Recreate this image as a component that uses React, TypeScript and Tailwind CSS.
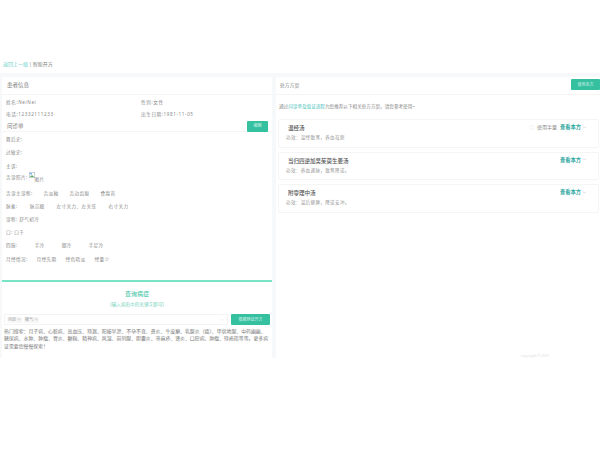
import { ChevronDown } from "lucide-react";

const FONT = "font-['Noto_Sans','Noto_Sans_CJK_SC',sans-serif]";

function InfoLine({ items, gap = "gap-[11px]" }: { items: string[]; gap?: string }) {
  return (
    <div className={`flex items-center h-[13.2px] text-[4.6px] tracking-[0.4px] text-[#8a8a8a] ${gap}`}>
      {items.map((t) => (
        <span key={t} className="whitespace-nowrap">{t}</span>
      ))}
    </div>
  );
}

const recipes = [
  { name: "温经汤", desc: "功效：温经散寒，养血祛瘀", extra: true },
  { name: "当归四逆加吴茱萸生姜汤", desc: "功效：养血通脉，散寒降逆。", extra: false },
  { name: "附零理中汤", desc: "功效：温后健脾，降逆安冲。", extra: false },
];

export default function App() {
  return (
    <div className={`w-[600px] h-[450px] bg-white flex flex-col overflow-hidden ${FONT}`}>
      {/* top breadcrumb */}
      <div className="h-[73px] flex items-end pb-[5px] pl-[3px] text-[5px] leading-[7px] text-[#888]">
        <span className="text-[#6fd3cb]">返回上一级</span>
        <span className="mx-[1px]">|</span>
        <span>智能开方</span>
      </div>

      <div className="h-[285px] bg-[#f7f8fa] flex gap-[4px] pt-[4px] pl-[2px]">
        {/* patient info */}
        <div className="w-[270px] h-[281px] bg-white flex flex-col">
          <div className="h-[18px] flex items-center pl-[5px] text-[5.5px] text-[#777] border-b border-[#f5f5f5]">患者信息</div>
          <div className="px-[4px] pt-[1px]">
            <div className="grid grid-cols-[135px_1fr] text-[4.6px] tracking-[0.6px] text-[#8a8a8a]">
              <div className="h-[12.5px] flex items-center">姓名:NeiNei</div>
              <div className="h-[12.5px] flex items-center">性别:女性</div>
              <div className="h-[12.5px] flex items-center">电话:12332111233</div>
              <div className="h-[12.5px] flex items-center">出生日期:1981-11-05</div>
            </div>
          </div>
          <div className="h-[11px] flex items-center justify-between pl-[5px] pr-[4px] border-b border-[#f5f5f5] text-[5.5px] text-[#777]">
            <span>问诊单</span>
            <button className="w-[21px] h-[11px] rounded-[1px] bg-[#35c0a0] text-[#d8f3ec] text-[4px]">编辑</button>
          </div>
          <div className="pl-[4px] pt-[1px] flex flex-col">
            <InfoLine items={["舞后史:"]} />
            <InfoLine items={["过敏史:"]} />
            <InfoLine items={["主诉:"]} />
            <div className="flex items-start h-[14px] text-[4.6px] tracking-[0.4px] text-[#8a8a8a]">
              <span className="mt-[1px]">舌诊照片:</span>
              <span className="relative w-[15px] h-[12px] -mt-[1px] ml-[1px]">
                <svg viewBox="0 0 6 6" className="absolute left-0 top-0 w-[6px] h-[6px]">
                  <rect x="0.3" y="0.3" width="5.4" height="5.4" fill="#fff" stroke="#a9b3c0" strokeWidth="0.6" />
                  <path d="M1 5 L3 3 L5 5 Z" fill="#4caf50" />
                  <rect x="1" y="1" width="2" height="1.5" fill="#7fb2f0" />
                </svg>
                <span className="absolute left-[6px] top-[4px] whitespace-nowrap">图片</span>
              </span>
            </div>
            <InfoLine items={["舌诊主诊断:", "舌淡釉", "舌边齿痕", "食腐苔"]} />
            <InfoLine items={["脉象:", "脉沉细", "左寸关力、左关弦", "右寸关力"]} gap="gap-[12px]" />
            <InfoLine items={["诊断: 舒气初冷"]} />
            <InfoLine items={["口: 口干"]} />
            <InfoLine items={["四肢:", "手冷", "脚冷", "手足冷"]} gap="gap-[17px]" />
            <InfoLine items={["月经情况:", "月经先期", "经色暗淡", "经量少"]} gap="gap-[9px]" />
          </div>

          {/* syndrome search */}
          <div className="mt-auto h-[78px] border-t-2 border-[#7ae3c6] flex flex-col">
            <div className="text-center text-[6px] leading-[8px] text-[#35c0a0] mt-[8px]">查询病症</div>
            <div className="text-center text-[4.6px] leading-[7px] text-[#6fd0b8] mt-[3px]">(输入病名中的关键字即可)</div>
            <div className="flex items-center justify-between mt-[6px] px-[2px]">
              <div className="w-[224px] h-[11px] border border-[#f3f3f3] flex items-center justify-between pl-[2px] pr-[3px] text-[4px] text-[#999]">
                <span className="flex gap-[2px]">
                  <span className="bg-[#f7f7f7] px-[1px]">月经 ⓧ</span>
                  <span className="bg-[#f7f7f7] px-[1px]">痛气 ⓧ</span>
                </span>
                <ChevronDown className="w-[4px] h-[4px] text-[#ccc]" />
              </div>
              <button className="w-[39px] h-[11px] rounded-[1px] bg-[#35c0a0] text-[#d8f3ec] text-[4px]">根据辨证开方</button>
            </div>
            <p className="px-[2px] mt-[3px] text-[4.9px] leading-[7.4px] text-[#777]">
              热门搜索：月子病、心脏病、高血压、痔漏、阳痿早泄、不孕不育、鼻炎、牛皮癣、乳腺炎（癌）、甲状地腺、中药幽幽、糖尿病、水肿、肿瘤、胃炎、癫痫、精神病、风湿、前列腺、胆囊炎、荨麻疹、肾炎、口腔病、肿瘤、痔疮指等等。更多病证需要您慢慢探索！
            </p>
          </div>
        </div>

        {/* prescription plan */}
        <div className="flex-1 h-[281px] bg-white flex flex-col">
          <div className="h-[18px] flex items-center justify-between pl-[4px] text-[4.8px] text-[#888] border-b border-[#f5f5f5]">
            <span>处方方案</span>
            <button className="w-[29px] h-[11px] -mt-[2px] rounded-[1px] bg-[#35c0a0] text-[#d8f3ec] text-[4px]">使用本方</button>
          </div>
          <div className="pl-[3px] h-[23px] flex items-center text-[4.6px] text-[#888]">
            <span>
              通过<span className="text-[#4cc4bb]">问诊单及值证流程</span>为您推荐以下相关处方方案，请您参考使用~
            </span>
          </div>
          <div className="flex flex-col gap-[4px] pl-[2px] pr-[1px] pt-[1px]">
            {recipes.map((r) => (
              <div key={r.name} className="h-[28.5px] border border-[#f5f5f5] rounded-[2px] relative flex flex-col pt-[4px]">
                <div className="pl-[9px] text-[5.5px] leading-[8px] font-medium text-[#555]">{r.name}</div>
                <div className="pl-[7px] mt-[2px] text-[4.5px] tracking-[0.4px] leading-[6px] text-[#999]">{r.desc}</div>
                <div className="absolute right-[11px] top-[3px] flex items-center gap-[1px] text-[5.25px] leading-[8px]">
                  {r.extra && <span className="text-[5px] text-[#888] mr-[2px]">使用半量</span>}
                  <span className="font-bold text-[#2fa8a0]">查看本方</span>
                  <ChevronDown className="w-[5px] h-[5px] text-[#aaa]" />
                </div>
                {r.extra && <span className="absolute right-[64px] top-[5px] w-[5px] h-[5px] rounded-full border border-[#f3f3f3]" />}
              </div>
            ))}
          </div>
          <div className="mt-auto pl-[245px] text-[3.5px] leading-[4px] text-[#ddd]">copyright © 2021</div>
        </div>
      </div>
    </div>
  );
}
